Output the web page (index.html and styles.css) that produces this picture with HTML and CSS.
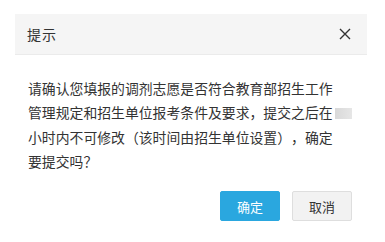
FILE: index.html
```html
<!DOCTYPE html>
<html lang="zh-CN">
<head>
<meta charset="utf-8">
<link rel="stylesheet" href="styles.css">
</head>
<body>
<div class="dialog">
  <div class="dialog-header">
    <span class="dialog-title">提示</span>
    <span class="dialog-close" aria-label="关闭">
      <svg width="12" height="12" viewBox="0 0 12 12"><path d="M1 1L11 11M11 1L1 11" stroke="#333" stroke-width="1.4" fill="none"/></svg>
    </span>
  </div>
  <div class="dialog-body">
    <p class="message">请确认您填报的调剂志愿是否符合教育部招生工作<br>管理规定和招生单位报考条件及要求，提交之后在<span class="redact"></span><br>小时内不可修改（该时间由招生单位设置），确定<br>要提交吗？</p>
  </div>
  <div class="dialog-footer">
    <button class="btn btn-primary">确定</button>
    <button class="btn btn-default">取消</button>
  </div>
</div>
</body>
</html>
```

FILE: styles.css
```css
html, body {
  margin: 0;
  padding: 0;
  background: #ffffff;
}
body {
  font-family: "Noto Sans CJK SC", "Microsoft YaHei", sans-serif;
  color: #333;
  text-spacing-trim: space-all;
}
.dialog {
  margin: 14px 0 0 15px;
  width: 352px;
  background: #fff;
}
.dialog-header {
  height: 40px;
  background: #f5f5f5;
  border-bottom: 1px solid #ebebeb;
  display: flex;
  align-items: center;
  justify-content: space-between;
  padding: 0 16px 0 12px;
}
.dialog-title {
  font-size: 14px;
  color: #333;
  letter-spacing: 1px;
}
.dialog-close {
  display: flex;
  width: 12px;
  height: 12px;
}
.dialog-body {
  padding: 21px 15px 0 13px;
}
.message {
  margin: 0;
  font-size: 13.85px;
  line-height: 24.3px;
  color: #333;
  text-spacing-trim: space-all;
}
.redact {
  display: inline-block;
  width: 17px;
  height: 11px;
  margin-left: 2px;
  vertical-align: -1px;
  background: linear-gradient(to right, #d9d9d9, #e6e6e6);
}
.dialog-footer {
  display: flex;
  justify-content: flex-end;
  gap: 12px;
  padding: 18px 15px 0 0;
}
.btn {
  width: 60px;
  height: 30px;
  border-radius: 2px;
  font-family: "Noto Sans CJK SC", "Microsoft YaHei", sans-serif;
  font-size: 13px;
  padding: 0;
  cursor: pointer;
}
.btn-primary {
  background: #2aa7df;
  border: 1px solid #2aa7df;
  color: #fff;
}
.btn-default {
  background: #f2f2f2;
  border: 1px solid #dedede;
  color: #333;
}
```
